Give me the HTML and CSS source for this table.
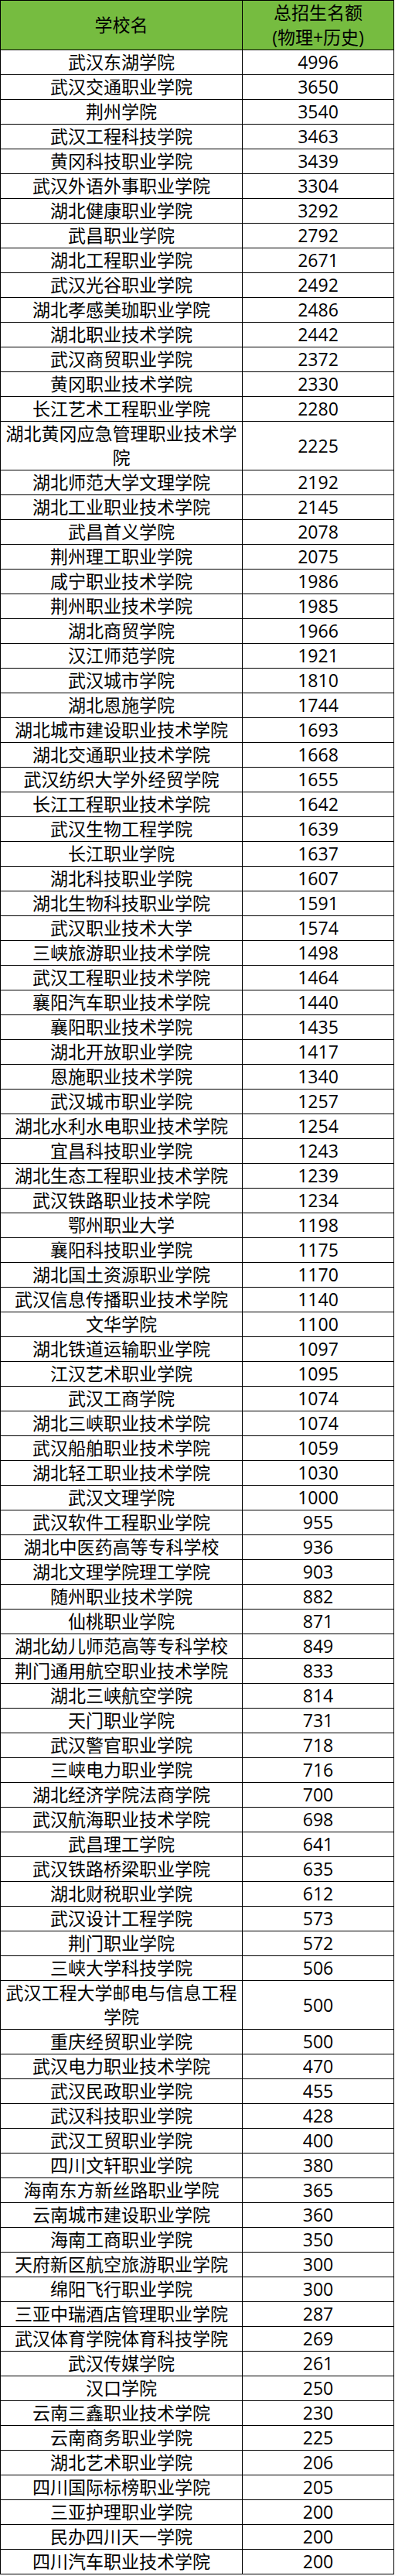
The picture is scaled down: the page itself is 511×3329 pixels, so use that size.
FILE: index.html
```html
<!DOCTYPE html>
<html lang="zh-CN">
<head>
<meta charset="utf-8">
<title>招生名额</title>
<link rel="stylesheet" href="styles.css">
</head>
<body>
<div class="table">
  <div class="cell head">学校名</div>
  <div class="cell head"><span class="hl">总招生名额</span><span class="hl">(物理+历史)</span></div>
  <div class="cell name">武汉东湖学院</div><div class="cell num">4996</div>
  <div class="cell name">武汉交通职业学院</div><div class="cell num">3650</div>
  <div class="cell name">荆州学院</div><div class="cell num">3540</div>
  <div class="cell name">武汉工程科技学院</div><div class="cell num">3463</div>
  <div class="cell name">黄冈科技职业学院</div><div class="cell num">3439</div>
  <div class="cell name">武汉外语外事职业学院</div><div class="cell num">3304</div>
  <div class="cell name">湖北健康职业学院</div><div class="cell num">3292</div>
  <div class="cell name">武昌职业学院</div><div class="cell num">2792</div>
  <div class="cell name">湖北工程职业学院</div><div class="cell num">2671</div>
  <div class="cell name">武汉光谷职业学院</div><div class="cell num">2492</div>
  <div class="cell name">湖北孝感美珈职业学院</div><div class="cell num">2486</div>
  <div class="cell name">湖北职业技术学院</div><div class="cell num">2442</div>
  <div class="cell name">武汉商贸职业学院</div><div class="cell num">2372</div>
  <div class="cell name">黄冈职业技术学院</div><div class="cell num">2330</div>
  <div class="cell name">长江艺术工程职业学院</div><div class="cell num">2280</div>
  <div class="cell name">湖北黄冈应急管理职业技术学院</div><div class="cell num">2225</div>
  <div class="cell name">湖北师范大学文理学院</div><div class="cell num">2192</div>
  <div class="cell name">湖北工业职业技术学院</div><div class="cell num">2145</div>
  <div class="cell name">武昌首义学院</div><div class="cell num">2078</div>
  <div class="cell name">荆州理工职业学院</div><div class="cell num">2075</div>
  <div class="cell name">咸宁职业技术学院</div><div class="cell num">1986</div>
  <div class="cell name">荆州职业技术学院</div><div class="cell num">1985</div>
  <div class="cell name">湖北商贸学院</div><div class="cell num">1966</div>
  <div class="cell name">汉江师范学院</div><div class="cell num">1921</div>
  <div class="cell name">武汉城市学院</div><div class="cell num">1810</div>
  <div class="cell name">湖北恩施学院</div><div class="cell num">1744</div>
  <div class="cell name">湖北城市建设职业技术学院</div><div class="cell num">1693</div>
  <div class="cell name">湖北交通职业技术学院</div><div class="cell num">1668</div>
  <div class="cell name">武汉纺织大学外经贸学院</div><div class="cell num">1655</div>
  <div class="cell name">长江工程职业技术学院</div><div class="cell num">1642</div>
  <div class="cell name">武汉生物工程学院</div><div class="cell num">1639</div>
  <div class="cell name">长江职业学院</div><div class="cell num">1637</div>
  <div class="cell name">湖北科技职业学院</div><div class="cell num">1607</div>
  <div class="cell name">湖北生物科技职业学院</div><div class="cell num">1591</div>
  <div class="cell name">武汉职业技术大学</div><div class="cell num">1574</div>
  <div class="cell name">三峡旅游职业技术学院</div><div class="cell num">1498</div>
  <div class="cell name">武汉工程职业技术学院</div><div class="cell num">1464</div>
  <div class="cell name">襄阳汽车职业技术学院</div><div class="cell num">1440</div>
  <div class="cell name">襄阳职业技术学院</div><div class="cell num">1435</div>
  <div class="cell name">湖北开放职业学院</div><div class="cell num">1417</div>
  <div class="cell name">恩施职业技术学院</div><div class="cell num">1340</div>
  <div class="cell name">武汉城市职业学院</div><div class="cell num">1257</div>
  <div class="cell name">湖北水利水电职业技术学院</div><div class="cell num">1254</div>
  <div class="cell name">宜昌科技职业学院</div><div class="cell num">1243</div>
  <div class="cell name">湖北生态工程职业技术学院</div><div class="cell num">1239</div>
  <div class="cell name">武汉铁路职业技术学院</div><div class="cell num">1234</div>
  <div class="cell name">鄂州职业大学</div><div class="cell num">1198</div>
  <div class="cell name">襄阳科技职业学院</div><div class="cell num">1175</div>
  <div class="cell name">湖北国土资源职业学院</div><div class="cell num">1170</div>
  <div class="cell name">武汉信息传播职业技术学院</div><div class="cell num">1140</div>
  <div class="cell name">文华学院</div><div class="cell num">1100</div>
  <div class="cell name">湖北铁道运输职业学院</div><div class="cell num">1097</div>
  <div class="cell name">江汉艺术职业学院</div><div class="cell num">1095</div>
  <div class="cell name">武汉工商学院</div><div class="cell num">1074</div>
  <div class="cell name">湖北三峡职业技术学院</div><div class="cell num">1074</div>
  <div class="cell name">武汉船舶职业技术学院</div><div class="cell num">1059</div>
  <div class="cell name">湖北轻工职业技术学院</div><div class="cell num">1030</div>
  <div class="cell name">武汉文理学院</div><div class="cell num">1000</div>
  <div class="cell name">武汉软件工程职业学院</div><div class="cell num">955</div>
  <div class="cell name">湖北中医药高等专科学校</div><div class="cell num">936</div>
  <div class="cell name">湖北文理学院理工学院</div><div class="cell num">903</div>
  <div class="cell name">随州职业技术学院</div><div class="cell num">882</div>
  <div class="cell name">仙桃职业学院</div><div class="cell num">871</div>
  <div class="cell name">湖北幼儿师范高等专科学校</div><div class="cell num">849</div>
  <div class="cell name">荆门通用航空职业技术学院</div><div class="cell num">833</div>
  <div class="cell name">湖北三峡航空学院</div><div class="cell num">814</div>
  <div class="cell name">天门职业学院</div><div class="cell num">731</div>
  <div class="cell name">武汉警官职业学院</div><div class="cell num">718</div>
  <div class="cell name">三峡电力职业学院</div><div class="cell num">716</div>
  <div class="cell name">湖北经济学院法商学院</div><div class="cell num">700</div>
  <div class="cell name">武汉航海职业技术学院</div><div class="cell num">698</div>
  <div class="cell name">武昌理工学院</div><div class="cell num">641</div>
  <div class="cell name">武汉铁路桥梁职业学院</div><div class="cell num">635</div>
  <div class="cell name">湖北财税职业学院</div><div class="cell num">612</div>
  <div class="cell name">武汉设计工程学院</div><div class="cell num">573</div>
  <div class="cell name">荆门职业学院</div><div class="cell num">572</div>
  <div class="cell name">三峡大学科技学院</div><div class="cell num">506</div>
  <div class="cell name">武汉工程大学邮电与信息工程学院</div><div class="cell num">500</div>
  <div class="cell name">重庆经贸职业学院</div><div class="cell num">500</div>
  <div class="cell name">武汉电力职业技术学院</div><div class="cell num">470</div>
  <div class="cell name">武汉民政职业学院</div><div class="cell num">455</div>
  <div class="cell name">武汉科技职业学院</div><div class="cell num">428</div>
  <div class="cell name">武汉工贸职业学院</div><div class="cell num">400</div>
  <div class="cell name">四川文轩职业学院</div><div class="cell num">380</div>
  <div class="cell name">海南东方新丝路职业学院</div><div class="cell num">365</div>
  <div class="cell name">云南城市建设职业学院</div><div class="cell num">360</div>
  <div class="cell name">海南工商职业学院</div><div class="cell num">350</div>
  <div class="cell name">天府新区航空旅游职业学院</div><div class="cell num">300</div>
  <div class="cell name">绵阳飞行职业学院</div><div class="cell num">300</div>
  <div class="cell name">三亚中瑞酒店管理职业学院</div><div class="cell num">287</div>
  <div class="cell name">武汉体育学院体育科技学院</div><div class="cell num">269</div>
  <div class="cell name">武汉传媒学院</div><div class="cell num">261</div>
  <div class="cell name">汉口学院</div><div class="cell num">250</div>
  <div class="cell name">云南三鑫职业技术学院</div><div class="cell num">230</div>
  <div class="cell name">云南商务职业学院</div><div class="cell num">225</div>
  <div class="cell name">湖北艺术职业学院</div><div class="cell num">206</div>
  <div class="cell name">四川国际标榜职业学院</div><div class="cell num">205</div>
  <div class="cell name">三亚护理职业学院</div><div class="cell num">200</div>
  <div class="cell name">民办四川天一学院</div><div class="cell num">200</div>
  <div class="cell name">四川汽车职业技术学院</div><div class="cell num">200</div>
</div>
</body>
</html>
```
FILE: styles.css
```css
html, body {
  margin: 0;
  padding: 0;
  background: #ffffff;
}

.table {
  display: grid;
  grid-template-columns: 312px 195px;
  gap: 1px;
  padding: 1px;
  width: 508px;
  background: #000000;
  font-family: "Open Sans", "Noto Sans CJK SC", sans-serif;
  font-size: 23px;
  color: #000000;
}

.cell {
  background: #ffffff;
  text-align: center;
  line-height: 31px;
  padding: 0 4px;
  display: flex;
  align-items: center;
  justify-content: center;
  word-break: break-all;
}

.head {
  background: #76bc40;
  height: 63px;
  line-height: 31.5px;
  flex-direction: column;
}

.hl {
  display: block;
}
```
